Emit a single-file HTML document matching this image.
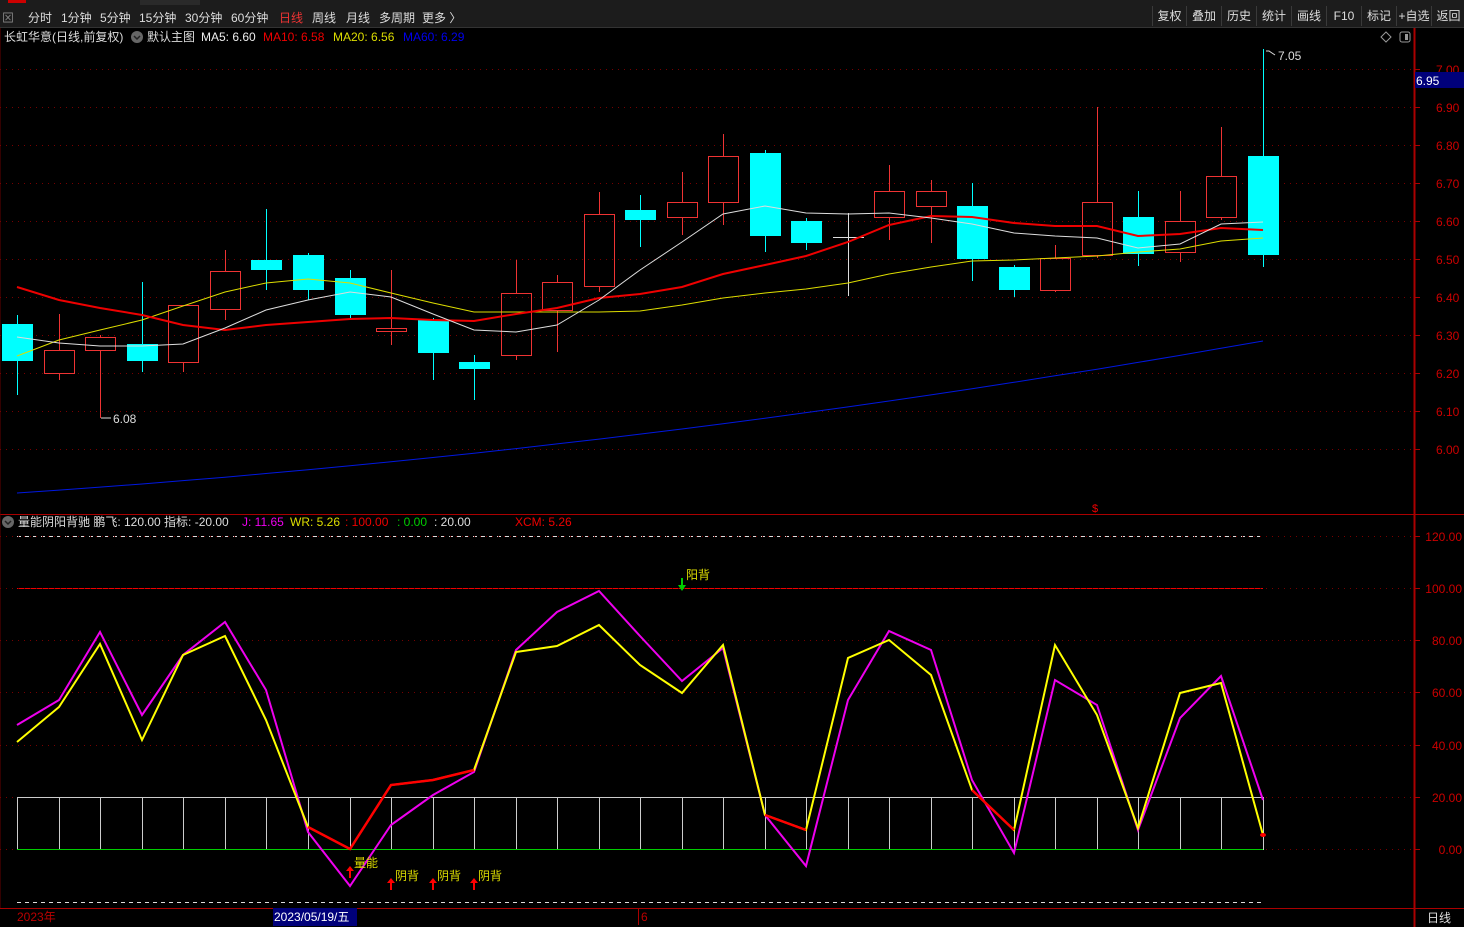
<!DOCTYPE html>
<html><head><meta charset="utf-8"><style>
html,body{margin:0;padding:0;background:#000;width:1464px;height:927px;overflow:hidden;font-family:"Liberation Sans","Noto Sans CJK SC",sans-serif}
#tb{position:absolute;left:0;top:0;width:1464px;height:27px;background:#1c1c1c;border-bottom:1px solid #333}
#tb span{position:absolute;top:9px;font-size:12px;color:#ddd}
.rb{position:absolute;top:6px;height:20px;background:#1c1c1c;border-left:1px solid #3a3a3a;color:#ddd;font-size:12px;line-height:20px;text-align:center}
svg{position:absolute;left:0;top:0}
.t{font-size:12px}
</style></head><body>
<div id="tb">
<div style="position:absolute;left:8px;top:0;width:18px;height:3px;background:#c00"></div>
<div style="position:absolute;left:140px;top:0;width:60px;height:5px;background:#2a2a2a"></div>
<span style="left:2px;color:#888">⊠</span>
<span style="left:28px">分时</span><span style="left:61px">1分钟</span><span style="left:100px">5分钟</span><span style="left:139px">15分钟</span><span style="left:185px">30分钟</span><span style="left:231px">60分钟</span><span style="left:279px;color:#e33">日线</span><span style="left:312px">周线</span><span style="left:346px">月线</span><span style="left:379px">多周期</span><span style="left:422px">更多 〉</span>
<div class="rb" style="left:1152px;width:33px">复权</div><div class="rb" style="left:1186px;width:34px">叠加</div><div class="rb" style="left:1221px;width:34px">历史</div><div class="rb" style="left:1256px;width:34px">统计</div><div class="rb" style="left:1291px;width:34px">画线</div><div class="rb" style="left:1326px;width:34px">F10</div><div class="rb" style="left:1361px;width:34px">标记</div><div class="rb" style="left:1396px;width:34px">+自选</div><div class="rb" style="left:1431px;width:33px">返回</div>
</div>
<svg id="s" width="1464" height="927" style="top:0">
<g fill="none">
<line x1="1414.5" y1="28" x2="1414.5" y2="927" stroke="#a00" stroke-width="2"/>
<line x1="0" y1="514.5" x2="1464" y2="514.5" stroke="#a00"/>
<line x1="0" y1="908.5" x2="1464" y2="908.5" stroke="#a00"/>
<line x1="0" y1="28" x2="0" y2="908" stroke="#600"/>
<line x1="17" y1="536.5" x2="1263" y2="536.5" stroke="#ddd" stroke-dasharray="4 4"/>
<line x1="17" y1="902.5" x2="1263" y2="902.5" stroke="#ddd" stroke-dasharray="4 4"/>
<line x1="17" y1="588.5" x2="1263" y2="588.5" stroke="#e00"/>
<line x1="17" y1="849.5" x2="1263" y2="849.5" stroke="#0c0"/>
</g>
<g id="grid"></g><g id="c"></g><g id="ind"></g>
<g class="t">
<text x="4" y="41" fill="#ddd">长虹华意(日线,前复权)</text>
<circle cx="137" cy="37" r="6" fill="#666"/><path d="M134 36l3 3 3-3" stroke="#222" fill="none" stroke-width="1.5"/>
<text x="147" y="41" fill="#ddd">默认主图</text>
<text x="201" y="41" fill="#eee">MA5: 6.60</text>
<text x="263" y="41" fill="#e00">MA10: 6.58</text>
<text x="333" y="41" fill="#dd0">MA20: 6.56</text>
<text x="403" y="41" fill="#00e">MA60: 6.29</text>
<path d="M1386 32l5 5-5 5-5-5z" stroke="#999" fill="none"/><rect x="1400" y="32" width="10" height="10" rx="2" stroke="#999" fill="none"/><rect x="1405" y="34" width="3" height="6" fill="#999"/>
<circle cx="8" cy="522" r="6" fill="#666"/><path d="M5 521l3 3 3-3" stroke="#222" fill="none" stroke-width="1.5"/>
<text x="18" y="526" fill="#ddd">量能阴阳背驰 鹏飞: 120.00 指标: -20.00</text>
<text x="242" y="526" fill="#e0e">J: 11.65</text>
<text x="290" y="526" fill="#dd0">WR: 5.26</text>
<text x="345" y="526" fill="#e00">: 100.00</text>
<text x="397" y="526" fill="#0c0">: 0.00</text>
<text x="434" y="526" fill="#ddd">: 20.00</text>
<text x="515" y="526" fill="#e00">XCM: 5.26</text>
<text x="1278" y="60" fill="#ddd">7.05</text><path d="M1275 55l-6-4h-3" stroke="#ddd" fill="none"/>
<text x="113" y="423" fill="#ddd">6.08</text><path d="M111 418h-10" stroke="#ddd"/>
<rect x="1415" y="72" width="49" height="16" fill="#00007a"/><text x="1416" y="85" fill="#fff">6.95</text>
<text x="17" y="921" fill="#b00">2023年</text>
<rect x="273" y="908" width="84" height="18" fill="#00007a"/><text x="274" y="921" fill="#fff">2023/05/19/五</text>
<line x1="638.5" y1="909" x2="638.5" y2="925" stroke="#a00"/><text x="641" y="921" fill="#b00">6</text>
<text x="1427" y="922" fill="#ddd">日线</text>
<text x="686" y="579" fill="#dd0">阳背</text>
<text x="354" y="867" fill="#dd0">量能</text>
<text x="395" y="880" fill="#dd0">阴背</text><text x="437" y="880" fill="#dd0">阴背</text><text x="478" y="880" fill="#dd0">阴背</text>
<text x="1092" y="512" fill="#e00" font-size="11">$</text>
</g>
</svg>
<script>
var NS="http://www.w3.org/2000/svg";
function el(p,t,a,txt){var e=document.createElementNS(NS,t);for(var k in a)e.setAttribute(k,a[k]);if(txt)e.textContent=txt;document.getElementById(p).appendChild(e);return e;}
// grid
for(var i=0;i<11;i++){var y=69+i*38;el("grid","line",{x1:0,x2:1414,y1:y+.5,y2:y+.5,stroke:"#700","stroke-dasharray":"1 5"});el("grid","line",{x1:1414,x2:1420,y1:y+.5,y2:y+.5,stroke:"#a00"});el("grid","text",{x:1436,y:y+5,fill:"#c00","font-size":"12"},(7-i/10).toFixed(2));}
var iv=[[536,"120.00"],[588,"100.00"],[640,"80.00"],[692,"60.00"],[745,"40.00"],[797,"20.00"],[849,"0.00"]];
iv.forEach(function(v){el("grid","line",{x1:0,x2:1414,y1:v[0]+.5,y2:v[0]+.5,stroke:"#700","stroke-dasharray":"1 5"});el("grid","line",{x1:1414,x2:1420,y1:v[0]+.5,y2:v[0]+.5,stroke:"#a00"});el("grid","text",{x:1462,y:v[0]+5,fill:"#c00","font-size":"12","text-anchor":"end"},v[1]);});
var X=[17,59,100,142,183,225,266,308,350,391,433,474,516,557,599,640,682,723,765,806,848,889,931,972,1014,1055,1097,1138,1180,1221,1263];
// type, bodyTop, bodyBot, wickTop, wickBot
var C=[["c",324,361,315,395],["r",350,373,314,380],["r",337,350,335,418],["c",344,361,282,372],["r",305,362,305,372],["r",271,309,250,320],["c",260,270,209,290],["c",255,290,253,300],["c",278,315,270,318],["r",328,331,270,345],["c",320,353,318,380],["c",362,369,355,400],["r",293,355,260,360],["r",282,310,275,352],["r",214,286,192,292],["c",210,220,195,247],["r",202,217,172,235],["r",156,202,134,225],["c",153,236,150,252],["c",221,243,218,250],["w",237,237,213,296],["r",191,217,165,240],["r",191,206,180,243],["c",206,259,183,281],["c",267,290,265,297],["r",258,290,245,292],["r",202,255,107,258],["c",217,254,191,266],["r",221,252,191,262],["r",176,217,127,220],["c",156,255,49,267]];
C.forEach(function(c,i){var x=X[i];
if(c[0]=="c"){el("c","line",{x1:x+.5,x2:x+.5,y1:c[3],y2:c[4],stroke:"#0ff"});el("c","rect",{x:x-15,y:c[1],width:31,height:c[2]-c[1],fill:"#0ff"});}
else if(c[0]=="r"){el("c","line",{x1:x+.5,x2:x+.5,y1:c[3],y2:c[1],stroke:"#e33"});el("c","line",{x1:x+.5,x2:x+.5,y1:c[2],y2:c[4],stroke:"#e33"});el("c","rect",{x:x-14.5,y:c[1]+.5,width:30,height:Math.max(c[2]-c[1],2),fill:"none",stroke:"#e33"});}
else{el("c","line",{x1:x+.5,x2:x+.5,y1:c[3],y2:c[4],stroke:"#ddd"});el("c","line",{x1:x-15,x2:x+16,y1:c[1]+.5,y2:c[1]+.5,stroke:"#ddd"});}
});
function pl(g,ys,col,w,xs){var p=(xs||X).map(function(x,i){return x+","+ys[i]}).join(" ");el(g,"polyline",{points:p,fill:"none",stroke:col,"stroke-width":w||1});}
pl("c",[493,492,490,488,485,482,478,474,472,470,467,465,463,460,457,453,450,446,441,436,430,424,418,412,406,400,394,388,383,377,371].map(function(y,i){return y}),"#0018e0",1,X.map(function(x){return x}));
// fix blue to end 341
(function(){var pts=[];for(var i=0;i<31;i++){var t=i/30;pts.push(493-152*(0.55*t+0.45*t*t));}document.getElementById("c").lastChild.setAttribute("points",X.map(function(x,i){return x+","+pts[i].toFixed(1)}).join(" "));})();
pl("c",[356,340,330,320,306,292,283,279,283,293,303,312,312,312,312,311,305,298,293,289,283,274,267,261,260,258,256,252,249,241,238],"#dd0");
pl("c",[287,300,308,315,325,330,325,322,319,318,320,321,314,308,298,294,287,274,265,256,242,225,216,217,223,226,226,236,234,228,230],"#e00",2);
pl("c",[337,343,346,346,344,328,310,300,292,297,314,330,332,325,300,270,242,214,206,213,214,213,218,224,233,236,238,248,244,224,222],"#ddd");
// indicator box
el("ind","rect",{x:17.5,y:797.5,width:1246,height:52,fill:"none",stroke:"#ccc"});
X.forEach(function(x){el("ind","line",{x1:x+.5,x2:x+.5,y1:797,y2:849,stroke:"#ccc"});});
el("ind","line",{x1:17,x2:1263,y1:849.5,y2:849.5,stroke:"#0c0"});
pl("ind",[725,700,632,715,655,622,690,832,886,825,795,772,650,612,591,636,681,648,815,866,700,631,650,780,853,680,705,830,718,676,800],"#e0e",2);
pl("ind",[742,707,644,740,655,636,720,827,849,785,780,770,652,646,625,665,693,645,815,830,658,640,675,790,830,645,715,828,693,683,835],"#ff0",2);
pl("ind",[827,849,785,780,770],"#f00",2.5,[308,350,391,433,474]);
pl("ind",[815,830],"#f00",2.5,[765,806]);
pl("ind",[790,830],"#f00",2.5,[972,1014]);
el("ind","ellipse",{cx:1263,cy:835,rx:3,ry:2,fill:"#f00"});
function up(x,y){el("ind","path",{d:"M"+x+" "+(y-12)+"l-4 5h8z",fill:"#f00"});el("ind","line",{x1:x,x2:x,y1:y-8,y2:y,stroke:"#f00","stroke-width":2});}
up(350,878);up(391,890);up(433,890);up(474,890);
el("ind","line",{x1:682,x2:682,y1:578,y2:587,stroke:"#0c0","stroke-width":2});el("ind","path",{d:"M678 585h8l-4 6z",fill:"#0c0"});
</script>
</body></html>
